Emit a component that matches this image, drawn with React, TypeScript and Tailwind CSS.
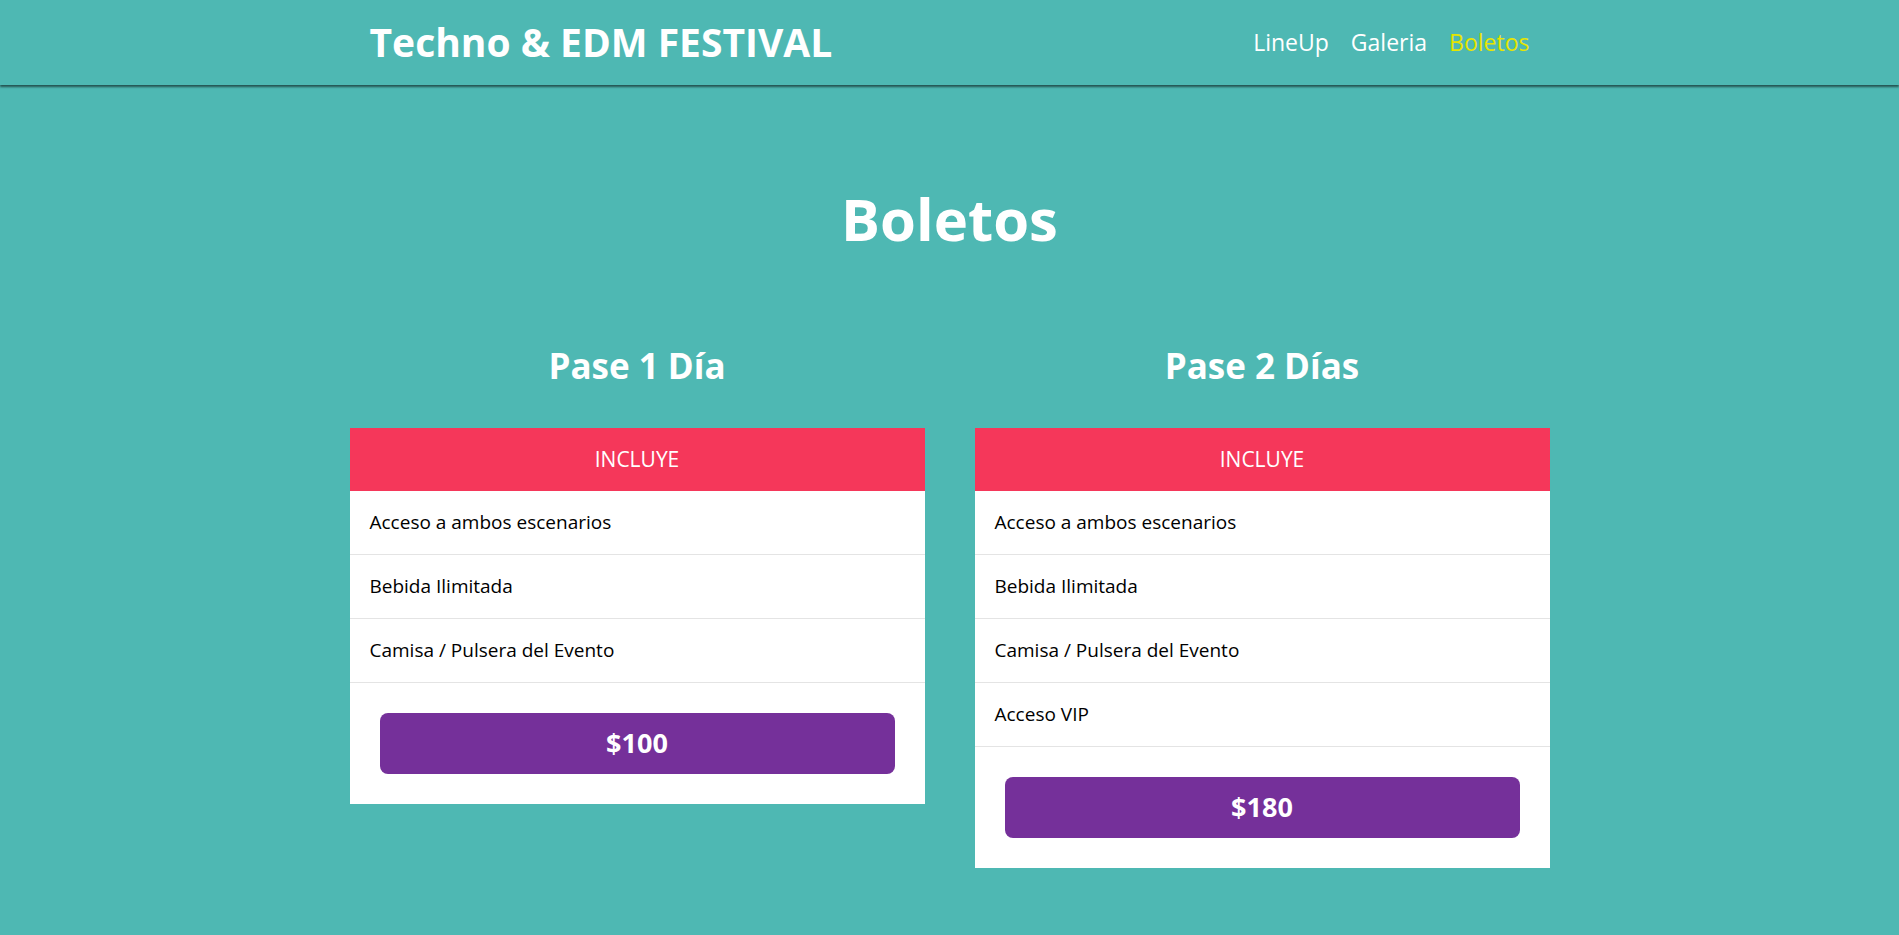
const PASSES = [
  {
    title: "Pase 1 Día",
    price: "$100",
    items: ["Acceso a ambos escenarios", "Bebida Ilimitada", "Camisa / Pulsera del Evento"],
  },
  {
    title: "Pase 2 Días",
    price: "$180",
    items: ["Acceso a ambos escenarios", "Bebida Ilimitada", "Camisa / Pulsera del Evento", "Acceso VIP"],
  },
];

export default function App() {
  return (
    <div className="min-h-screen bg-[#4eb8b3] font-['Open_Sans','Noto_Sans',sans-serif]">
      <header className="h-[85px] shadow-[0_2px_2px_rgba(0,0,0,0.55)]">
        <div className="mx-auto flex h-full max-w-[1200px] items-center justify-between px-5">
          <h1 className="text-[39px] font-bold text-white">Techno &amp; EDM FESTIVAL</h1>
          <nav className="flex gap-[22px] text-[23px] text-white">
            <a href="#">LineUp</a>
            <a href="#">Galeria</a>
            <a href="#" className="text-[#e6e500]">Boletos</a>
          </nav>
        </div>
      </header>

      <main className="mx-auto max-w-[1200px] pb-16">
        <h2 className="mt-[106px] text-center text-[58px] leading-[56px] font-bold text-white">Boletos</h2>

        <div className="mt-[101px] grid grid-cols-2 items-start gap-[50px]">
          {PASSES.map((pass) => (
            <section key={pass.title}>
              <h3 className="text-center text-[35px] leading-[36px] font-bold text-white">{pass.title}</h3>
              <div className="mt-[44px] bg-white">
                <div className="flex h-[63px] items-center justify-center bg-[#f5375a] text-[21px] text-white">
                  INCLUYE
                </div>
                <ul>
                  {pass.items.map((item) => (
                    <li
                      key={item}
                      className="flex h-[64px] items-center border-b border-[#e4e4e4] px-5 text-[19px] text-black"
                    >
                      {item}
                    </li>
                  ))}
                </ul>
                <div className="p-[30px]">
                  <button className="h-[61px] w-full rounded-[8px] bg-[#75309a] text-[27px] font-bold text-white">
                    {pass.price}
                  </button>
                </div>
              </div>
            </section>
          ))}
        </div>
      </main>
    </div>
  );
}
